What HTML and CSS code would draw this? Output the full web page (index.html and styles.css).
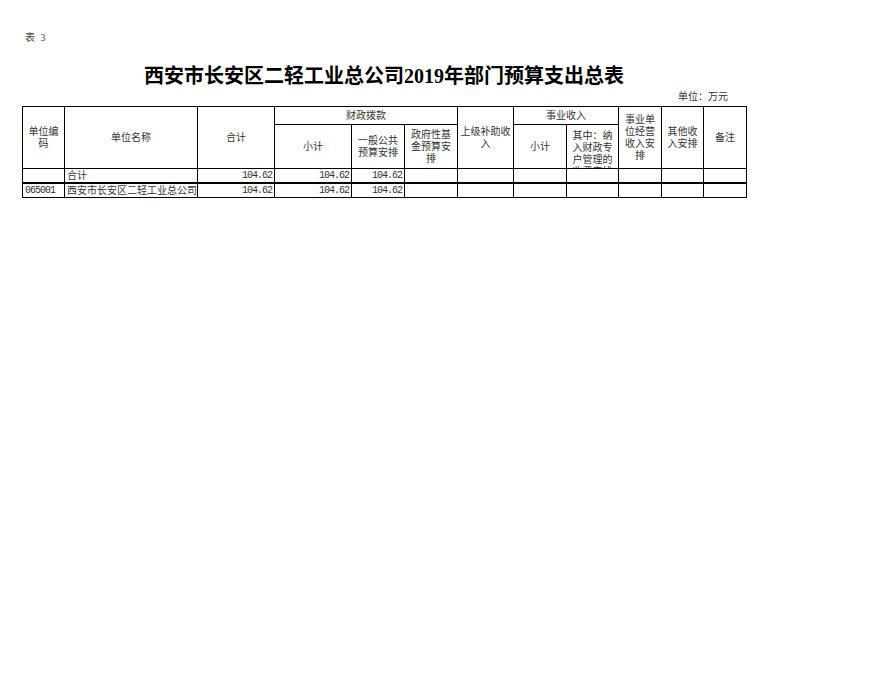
FILE: index.html
```html
<!DOCTYPE html>
<html lang="zh">
<head>
<meta charset="utf-8">
<title>部门预算支出总表</title>
<link rel="stylesheet" href="styles.css">
</head>
<body>
<div class="sheet">
  <div class="tag">表 3</div>
  <h1 class="title">西安市长安区二轻工业总公司2019年部门预算支出总表</h1>
  <div class="unit">单位：万元</div>
  <table class="grid">
    <colgroup>
      <col class="w42"><col class="w133"><col class="w77"><col class="w77"><col class="w53"><col class="w53">
      <col class="w56"><col class="w53"><col class="w52"><col class="w43"><col class="w42"><col class="w43">
    </colgroup>
    <thead>
      <tr class="h1">
        <th rowspan="2">单位编码</th>
        <th rowspan="2">单位名称</th>
        <th rowspan="2">合计</th>
        <th colspan="3">财政拨款</th>
        <th rowspan="2">上级补助收入</th>
        <th colspan="2">事业收入</th>
        <th rowspan="2">事业单位经营收入安排</th>
        <th rowspan="2">其他收入安排</th>
        <th rowspan="2">备注</th>
      </tr>
      <tr class="h2">
        <th>小计</th>
        <th>一般公共预算安排</th>
        <th>政府性基金预算安排</th>
        <th>小计</th>
        <th class="clip-cell"><div class="clip">其中：纳入财政专户管理的收费安排</div></th>
      </tr>
    </thead>
    <tbody>
      <tr class="total">
        <td></td>
        <td class="txt">合计</td>
        <td class="num">104.62</td>
        <td class="num">104.62</td>
        <td class="num">104.62</td>
        <td></td><td></td><td></td><td></td><td></td><td></td><td></td>
      </tr>
      <tr>
        <td class="code">065001</td>
        <td class="txt">西安市长安区二轻工业总公司</td>
        <td class="num">104.62</td>
        <td class="num">104.62</td>
        <td class="num">104.62</td>
        <td></td><td></td><td></td><td></td><td></td><td></td><td></td>
      </tr>
    </tbody>
  </table>
</div>
</body>
</html>
```

FILE: styles.css
```css
html, body {
  margin: 0;
  padding: 0;
  background: #ffffff;
}

body {
  font-family: "Liberation Serif", "Noto Sans CJK SC", serif;
  color: #222;
}

.sheet {
  width: 724px;
  padding: 32px 0 0 22px;
}

.tag {
  font-size: 10px;
  line-height: 12px;
  height: 12px;
  padding-left: 3px;
  word-spacing: 3px;
  color: #444;
}

.title {
  margin: 20px 0 0 0;
  font-size: 20px;
  line-height: 24px;
  font-weight: bold;
  text-align: center;
  color: #000;
}

.unit {
  font-size: 10px;
  line-height: 12px;
  height: 15px;
  margin-top: 3px;
  text-align: right;
  padding-right: 18px;
  color: #333;
}

.grid {
  border-collapse: collapse;
  table-layout: fixed;
  width: 724px;
  font-size: 10px;
  line-height: 12px;
}

.w42 { width: 42px; }
.w133 { width: 133px; }
.w77 { width: 77px; }
.w53 { width: 53px; }
.w56 { width: 56px; }
.w52 { width: 52px; }
.w43 { width: 43px; }

.grid th,
.grid td {
  border: 1px solid #000;
  padding: 0 2px;
  overflow: hidden;
}

.grid th {
  font-weight: normal;
  text-align: center;
  vertical-align: middle;
  color: #333;
}

.h1 { height: 18px; }
.h2 { height: 44px; }

.clip-cell {
  vertical-align: top;
  padding: 0 2px;
}

.clip {
  height: 43px;
  overflow: hidden;
  padding-top: 5px;
  box-sizing: border-box;
}

.grid td {
  height: 13px;
  line-height: 13px;
  white-space: nowrap;
  color: #333;
}

.total td {
  border-bottom: 2px solid #000;
}

.txt {
  text-align: left;
}

.num {
  text-align: right;
  font-family: "Liberation Mono", monospace;
  letter-spacing: -1px;
  padding-right: 2px;
}

.code {
  text-align: left;
  font-family: "Liberation Mono", monospace;
  letter-spacing: -1px;
}
```
